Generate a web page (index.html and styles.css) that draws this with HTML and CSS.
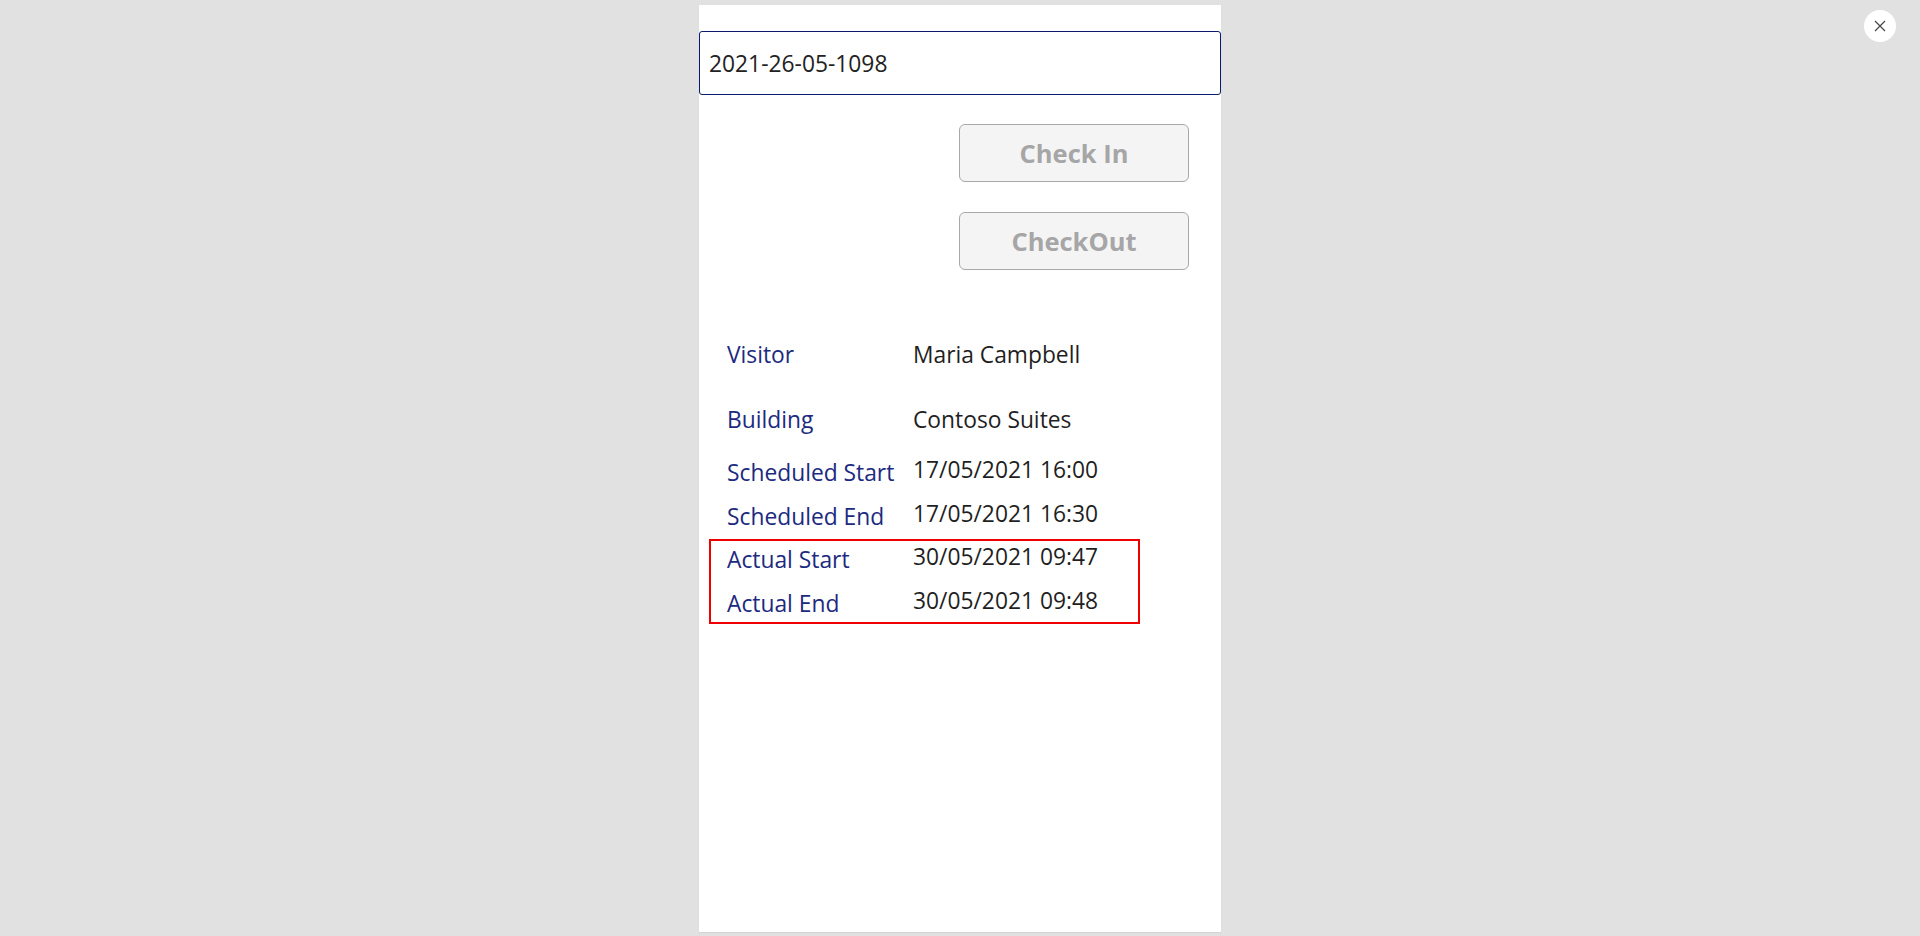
FILE: index.html
```html
<!DOCTYPE html>
<html lang="en">
<head>
<meta charset="utf-8">
<title>Visitor Check In</title>
<link rel="stylesheet" href="styles.css">
</head>
<body>
  <main class="panel">
    <div class="search">2021-26-05-1098</div>
    <div class="actions">
      <button class="btn" type="button">Check In</button>
      <button class="btn" type="button">CheckOut</button>
    </div>
    <section class="details">
      <div class="row row-visitor">
        <span class="label">Visitor</span>
        <span class="value">Maria Campbell</span>
      </div>
      <div class="row row-building">
        <span class="label">Building</span>
        <span class="value">Contoso Suites</span>
      </div>
      <div class="row row-sched">
        <span class="label">Scheduled Start</span>
        <span class="value raised">17/05/2021 16:00</span>
      </div>
      <div class="row row-tight">
        <span class="label">Scheduled End</span>
        <span class="value raised">17/05/2021 16:30</span>
      </div>
      <div class="highlight">
        <div class="row">
          <span class="label">Actual Start</span>
          <span class="value raised">30/05/2021 09:47</span>
        </div>
        <div class="row row-tight">
          <span class="label">Actual End</span>
          <span class="value raised">30/05/2021 09:48</span>
        </div>
      </div>
    </section>
  </main>
  <button class="close" type="button" aria-label="Close">
    <svg width="12" height="12" viewBox="0 0 12 12" aria-hidden="true">
      <path d="M1 1 L11 11 M11 1 L1 11" stroke="#444" stroke-width="1.2" fill="none"/>
    </svg>
  </button>
</body>
</html>
```

FILE: styles.css
```css
html, body {
  margin: 0;
  padding: 0;
}

body {
  background: #e1e1e1;
  height: 936px;
  overflow: hidden;
  display: flex;
  justify-content: center;
  align-items: flex-start;
  padding-top: 5px;
  box-sizing: border-box;
  font-family: "Open Sans", "Liberation Sans", sans-serif;
}

.panel {
  width: 522px;
  height: 927px;
  background: #ffffff;
  box-shadow: 0 1px 1px rgba(0, 0, 0, 0.06);
  padding-top: 26px;
  box-sizing: border-box;
  display: flex;
  flex-direction: column;
}

.search {
  height: 64px;
  border: 1px solid #0b1a6e;
  border-radius: 3px;
  box-sizing: border-box;
  padding-left: 9px;
  display: flex;
  align-items: center;
  font-size: 22.8px;
  color: #222222;
}

.actions {
  display: flex;
  flex-direction: column;
  align-items: flex-end;
  gap: 30px;
  padding-right: 32px;
  margin-top: 29px;
}

.btn {
  width: 230px;
  height: 58px;
  background: #f4f4f4;
  border: 1px solid #a8a8a8;
  border-radius: 6px;
  font-family: "Open Sans", "Liberation Sans", sans-serif;
  font-weight: 700;
  font-size: 25.5px;
  color: #a6a6a6;
  padding: 0;
  display: flex;
  align-items: center;
  justify-content: center;
}

.details {
  margin-top: 69px;
  display: flex;
  flex-direction: column;
  padding-left: 10px;
}

.row {
  display: grid;
  grid-template-columns: 186px 1fr;
  align-items: start;
  font-size: 22.8px;
  line-height: 32px;
  padding-left: 18px;
}

.label {
  color: #1c2a80;
  white-space: nowrap;
}

.value {
  color: #1f1f1f;
  white-space: nowrap;
}

.value.raised {
  margin-top: -3px;
}

.row-building {
  margin-top: 33px;
}

.row-sched {
  margin-top: 21px;
}

.row-tight {
  margin-top: 12px;
}

.highlight {
  margin-top: 6px;
  width: 431px;
  box-sizing: border-box;
  border: 2px solid #ee0000;
  padding: 3px 0 2px 0;
}

.highlight .row {
  padding-left: 16px;
}

.close {
  position: absolute;
  top: 10px;
  right: 24px;
  width: 32px;
  height: 32px;
  border-radius: 50%;
  background: #ffffff;
  border: none;
  padding: 0;
  display: flex;
  align-items: center;
  justify-content: center;
}
```
